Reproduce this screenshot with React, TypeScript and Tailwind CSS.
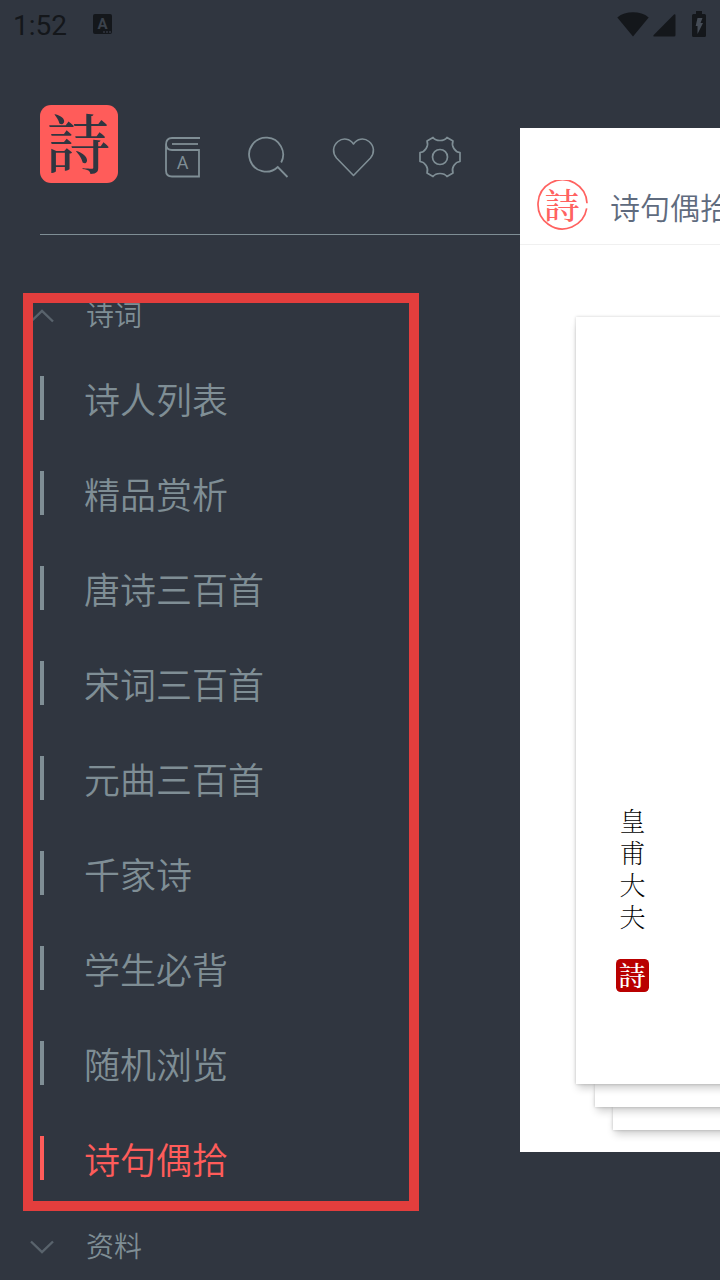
import { useState } from 'react';

const poemLinks = [
  '诗人列表',
  '精品赏析',
  '唐诗三百首',
  '宋词三百首',
  '元曲三百首',
  '千家诗',
  '学生必背',
  '随机浏览',
  '诗句偶拾',
];

const author = ['皇', '甫', '大', '夫'];

function StatusBar() {
  return (
    <div className="flex h-12 items-center justify-between pl-[13px] pr-[14px] text-[#14171b]">
      <div className="flex items-center gap-[26px]">
        <span className="pt-[3px] font-[Roboto,sans-serif] text-[28px] leading-8">1:52</span>
        <svg width="20" height="20" viewBox="0 0 20 20">
          <rect width="19" height="20" rx="2" fill="currentColor" />
          <text x="9.5" y="15" fontSize="15" fontWeight="700" textAnchor="middle" fill="#3a414b" fontFamily="Roboto, sans-serif">A</text>
          <path d="M10 18h2M13 18h2M16 18h2" stroke="#303640" strokeWidth="1.4" />
        </svg>
      </div>
      <div className="flex items-end">
        <svg width="32" height="25" viewBox="0 0 32 25" fill="currentColor">
          <path d="M16 24.500 0.300 5.400C4.500 2 10 0.300 16 0.300s11.500 1.700 15.700 5.100z" />
        </svg>
        <svg className="ml-1" width="23" height="23" viewBox="0 0 23 23" fill="currentColor">
          <path d="M21 0.500q1.500-0.800 1.500 1V21q0 1.500-1.500 1.500H1.500q-1.800 0-.8-1.500z" />
        </svg>
        <svg className="ml-4" width="14" height="26" viewBox="0 0 14 26">
          <path d="M4 0h6v3h2.500q1.500 0 1.500 1.500v20q0 1.500-1.500 1.500h-11Q0 26 0 24.500v-20Q0 3 1.500 3H4z" fill="currentColor" />
          <path d="M5.500 7h5l-2 5H11L5.500 23v-8H3.700z" fill="#454c56" />
        </svg>
      </div>
    </div>
  );
}

// the app's seal: filled square or open ring with the character inside
function Seal({ size, background, color, ring }: { size: number; background?: string; color: string; ring?: boolean }) {
  return (
    <svg className="shrink-0" width={size} height={size} viewBox="0 0 78 78" role="img">
      {background && <rect width="78" height="78" rx="11" fill={background} />}
      {ring && <path d="M76.500 35.500A37.500 37.500 0 1 0 76 43.500" fill="none" stroke={color} strokeWidth="2.600" />}
      <text
        x="38.500"
        y={ring ? 59 : 63}
        fontSize={ring ? 54 : 64}
        fontWeight="500"
        textAnchor="middle"
        fill={color}
        fontFamily="'Noto Serif CJK TC', 'Noto Sans CJK TC', sans-serif"
      >
        詩
      </text>
    </svg>
  );
}

function BookIcon() {
  return (
    <svg width="44" height="44" viewBox="0 0 44 44" fill="none" stroke="currentColor" strokeWidth="1.8">
      <path d="M40 3H12Q6 3 6 9.500V35.500q0 6 6 6H39V15H12Q6 15 6 9" />
      <path d="M12 9h26" />
      <text x="22.500" y="34" fontSize="18" textAnchor="middle" fill="currentColor" stroke="none" fontFamily="Roboto, sans-serif">A</text>
    </svg>
  );
}

function SearchIcon() {
  return (
    <svg width="44" height="44" viewBox="0 0 44 44" fill="none" stroke="currentColor" strokeWidth="1.800">
      <path d="M35.200 27.500A17 17 0 1 0 31.800 32L41.500 42" />
    </svg>
  );
}

function HeartIcon() {
  return (
    <svg width="44" height="44" viewBox="0 0 44 44" fill="none" stroke="currentColor" strokeWidth="1.600" strokeLinejoin="round">
      <path d="M21.500 9C18 3.500 11 2.500 6 6.500 0.500 11 .3 18 4.500 23L21.500 40.500 38.500 23C42.700 18 42.500 11 37 6.500 32 2.500 25 3.500 21.500 9z" />
    </svg>
  );
}

function GearIcon() {
  return (
    <svg width="44" height="44" viewBox="0 0 44 44" fill="none" stroke="currentColor" strokeWidth="1.700" strokeLinejoin="round">
      <path d="M15 2.500C18 6.500 26 6.500 29 2.500L35 6C33 11 37 17 42 17.500V26.500C37 27 33 33 35 38L29 41.500C26 37.500 18 37.500 15 41.500L9 38C11 33 7 27 2 26.500V17.500C7 17 11 11 9 6z" />
      <circle cx="22" cy="22" r="7.500" />
    </svg>
  );
}

function Chevron({ open }: { open: boolean }) {
  return (
    <svg width="24" height="18" viewBox="0 0 24 18" fill="none" stroke="#59636c" strokeWidth="2.400">
      <path d={open ? 'M1 16.500 12 5.800 23 16.500' : 'M1 5.500 12 16 23 5.500'} />
    </svg>
  );
}

function SectionHeading({ title, open, onClick }: { title: string; open: boolean; onClick?: () => void }) {
  return (
    <button onClick={onClick} className="flex h-14 w-full items-center gap-8 pl-[30px] text-[28px] leading-10 font-[350]">
      <Chevron open={open} />
      {title}
    </button>
  );
}

function Sidebar() {
  const [active, setActive] = useState('诗句偶拾');

  return (
    <aside className="w-13/18 shrink-0 text-[#7f8e95]">
      <div className="ml-10 flex items-center gap-[42px] border-b border-[#7f8e95] pt-[57px] pb-[51px]">
        <Seal size={78} background="#ff5c5a" color="#303640" />
        <div className="flex gap-[42px] pt-[26px]">
          <button aria-label="字典"><BookIcon /></button>
          <button aria-label="搜索"><SearchIcon /></button>
          <button aria-label="收藏"><HeartIcon /></button>
          <button aria-label="设置"><GearIcon /></button>
        </div>
      </div>

      <nav className="pt-[51px]">
        <div className="relative">
          <SectionHeading title="诗词" open />
          <ul className="pt-2">
            {poemLinks.map(item => (
              <li key={item}>
                <a
                  href="#"
                  onClick={() => setActive(item)}
                  className={`flex h-[95px] items-center gap-10 pl-10 text-[36px] leading-[44px] font-[350] ${item === active ? 'text-[#ff5c5a]' : ''}`}
                >
                  <span className="h-11 w-1 bg-current" />
                  {item}
                </a>
              </li>
            ))}
          </ul>
          <div className="pointer-events-none absolute top-[7px] -bottom-[6px] left-[23px] w-[396px] border-10 border-[#e33e3d]" />
        </div>
        <div className="pt-3">
          <SectionHeading title="资料" open={false} />
        </div>
      </nav>
    </aside>
  );
}

function PoemPage() {
  return (
    <main className="mt-20 flex h-[80vh] min-w-0 flex-1 flex-col overflow-hidden bg-white pb-[22px]">
      <header className="flex items-center gap-[22px] border-b border-[#f0f0f0] pt-[52px] pb-[13px] pl-[17px]">
        <Seal size={51} color="#ff6260" ring />
        <h1 className="text-[30px] leading-9 font-[350] whitespace-nowrap text-[#5f6b7e]">诗句偶拾</h1>
      </header>

      <article className="relative z-20 mt-[72px] -mr-4 ml-14 flex flex-1 flex-col items-start justify-end bg-white pb-[92px] pl-10 shadow-[0_0_3px_rgba(0,0,0,0.2),0_6px_8px_-2px_rgba(0,0,0,0.2)]">
        <div className="flex flex-col items-center gap-[27px]">
          <div className="flex flex-col font-['Noto_Serif_CJK_SC','Noto_Sans_CJK_SC',sans-serif] text-[26px] leading-8 font-extralight text-black">
            {author.map(char => (
              <span key={char}>{char}</span>
            ))}
          </div>
          <Seal size={33} background="#b90000" color="#ffffff" />
        </div>
      </article>
      <div className="relative z-10 -mr-4 ml-[75px] h-[23px] bg-white shadow-[0_0_3px_rgba(0,0,0,0.2),0_6px_8px_-2px_rgba(0,0,0,0.2)]" />
      <div className="-mr-4 ml-[93px] h-[23px] bg-white shadow-[0_0_3px_rgba(0,0,0,0.2),0_6px_8px_-2px_rgba(0,0,0,0.2)]" />
    </main>
  );
}

export default function App() {
  return (
    <div className="min-h-screen overflow-hidden bg-[#303640] font-['Noto_Sans_CJK_SC',sans-serif]">
      <StatusBar />
      <div className="flex items-start">
        <Sidebar />
        <PoemPage />
      </div>
    </div>
  );
}
